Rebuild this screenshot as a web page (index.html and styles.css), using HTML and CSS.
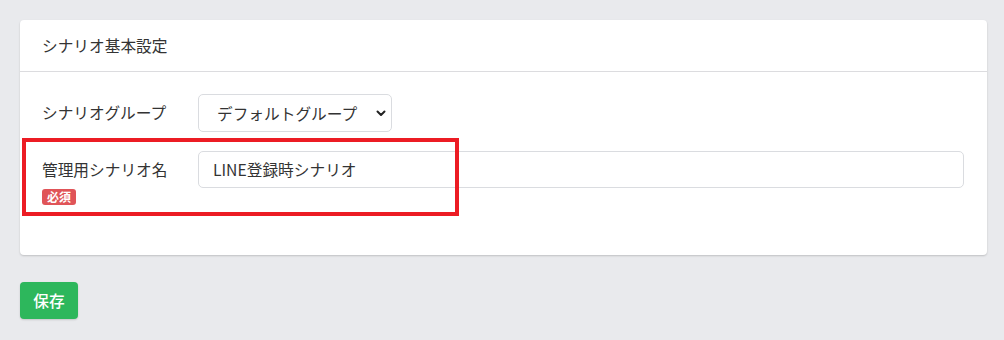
FILE: index.html
```html
<!DOCTYPE html>
<html lang="ja">
<head>
<meta charset="utf-8">
<link rel="stylesheet" href="styles.css">
</head>
<body>
<div class="page">
  <div class="card">
    <div class="card-header">シナリオ基本設定</div>
    <div class="card-body">
      <div class="row">
        <div class="label">シナリオグループ</div>
        <div class="select">
          <span>デフォルトグループ</span>
          <svg class="chev" width="12" height="12" viewBox="0 0 12 12"><path d="M2.5 4.5 L6 8 L9.5 4.5" fill="none" stroke="#222" stroke-width="2" stroke-linecap="round" stroke-linejoin="round"/></svg>
        </div>
      </div>
      <div class="row row-name">
        <div class="label">
          <div>管理用シナリオ名</div>
          <span class="badge">必須</span>
        </div>
        <div class="input">LINE登録時シナリオ</div>
        <div class="highlight"></div>
      </div>
    </div>
  </div>
  <button class="save">保存</button>
</div>
</body>
</html>
```

FILE: styles.css
```css
html, body {
  margin: 0;
  padding: 0;
  background: #e9eaed;
  font-family: "Noto Sans CJK JP", "Noto Sans", sans-serif;
  color: #333;
}
.page {
  padding: 20px 17px 20px 20px;
}
.card {
  background: #fff;
  border-radius: 4px;
  box-shadow: 0 1px 2px rgba(0,0,0,0.18);
}
.card-header {
  height: 52px;
  box-sizing: border-box;
  padding: 0 22px 1px;
  display: flex;
  align-items: center;
  font-size: 15.7px;
  border-bottom: 1px solid #dcdcdf;
}
.card-body {
  padding: 22px 23px 44px 22px;
  display: flex;
  flex-direction: column;
  gap: 19px;
}
.row {
  display: flex;
  align-items: flex-start;
  position: relative;
}
.label {
  width: 156px;
  flex: none;
  font-size: 15.7px;
  line-height: 22px;
  padding-top: 8px;
}
.label > div {
  margin-bottom: 8px;
}
.select {
  height: 38px;
  box-sizing: border-box;
  border: 1px solid #dadce0;
  border-radius: 5px;
  display: flex;
  align-items: center;
  padding: 0 4px 0 18px;
  font-size: 15.7px;
  gap: 10px;
}
.chev {
  margin-left: 8px;
}
.input {
  flex: 1;
  height: 37px;
  box-sizing: border-box;
  border: 1px solid #dadce0;
  border-radius: 5px;
  display: flex;
  align-items: center;
  padding: 0 14px;
  font-size: 15.7px;
}
.badge {
  display: inline-block;
  vertical-align: top;
  background: #e05458;
  color: #fff;
  font-size: 12px;
  font-weight: 700;
  line-height: 16px;
  padding: 0 5px;
  border-radius: 3px;
}
.highlight {
  position: absolute;
  left: -20px;
  top: -13px;
  width: 437px;
  height: 78px;
  box-sizing: border-box;
  border: 4px solid #ec1c24;
}
.save {
  margin-top: 27px;
  background: #2db75c;
  color: #fff;
  border: none;
  border-radius: 4px;
  font-family: inherit;
  font-size: 15.7px;
  font-weight: 500;
  height: 37px;
  width: 58px;
  padding: 0;
  box-shadow: 0 1px 2px rgba(0,0,0,0.15);
  display: block;
}
```
